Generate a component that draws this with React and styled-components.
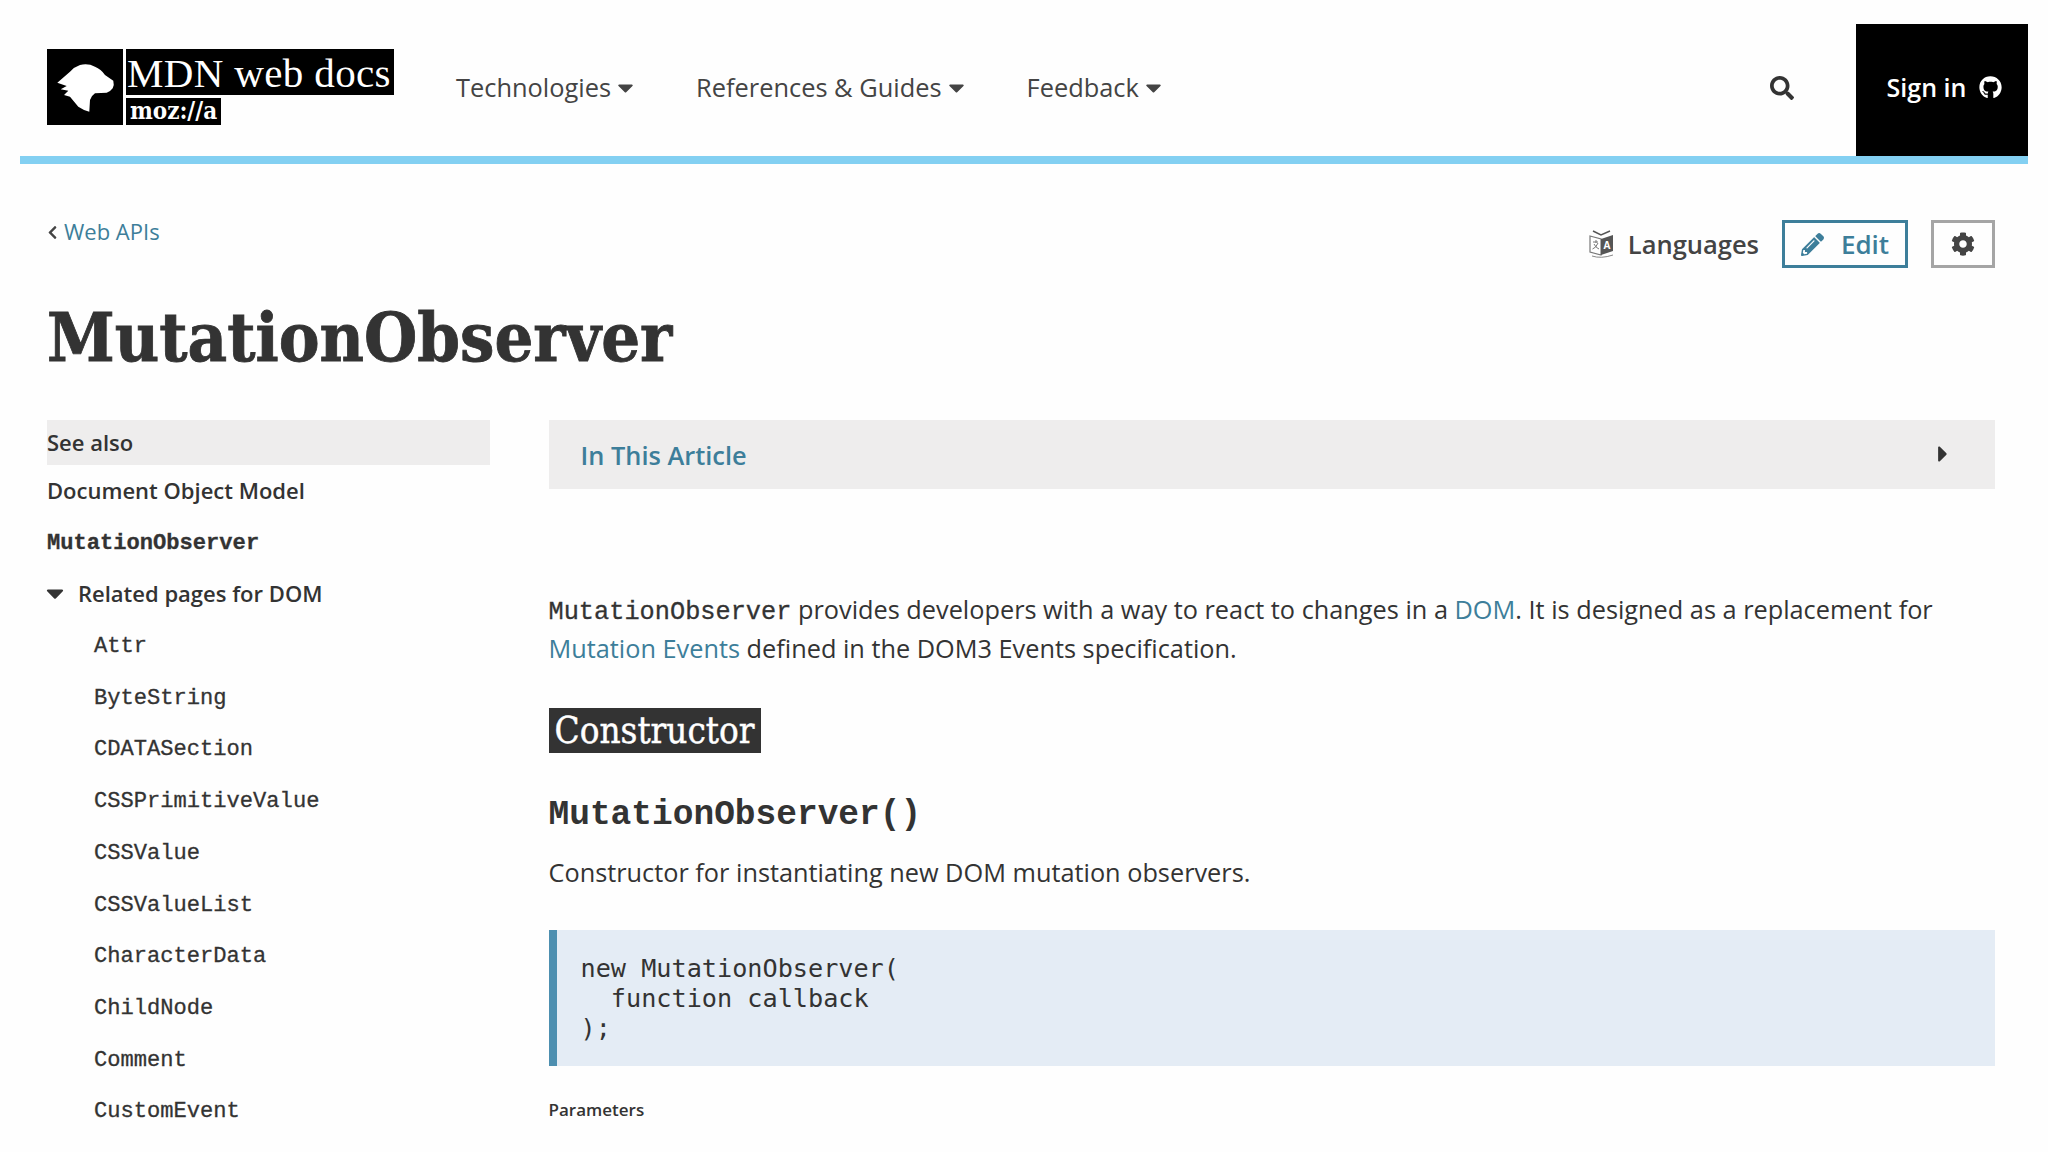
import React from 'react'
import styled, { createGlobalStyle } from 'styled-components'
import { FaCaretDown, FaCaretRight, FaChevronLeft, FaCog, FaGithub, FaPencilAlt, FaSearch } from 'react-icons/fa'

const GlobalStyle = createGlobalStyle`
  html, body {
    margin: 0;
    height: 1152px;
    overflow: hidden;
    background: #fefefe;
  }
  body {
    font-family: 'Open Sans', sans-serif;
    color: #333;
  }
`

const Page = styled.div`
  width: 2048px;
`
const TopBar = styled.header`
  display: flex;
  align-items: stretch;
  height: 132px;
  margin: 24px 20px 0;
  border-bottom: 8px solid #83d0f2;
`
const Logo = styled.a`
  display: flex;
  gap: 3px;
  margin: 25px 0 0 27px;
  height: 76px;
  color: #fff;
`
const LogoMark = styled.svg`
  width: 76px;
  height: 76px;
  background: #000;
`
const LogoWords = styled.div`
  display: flex;
  flex-direction: column;
  align-items: flex-start;
  gap: 3px;
`
const LogoTitle = styled.span`
  display: block;
  height: 46px;
  width: 268px;
  padding: 2px 0 0 1px;
  box-sizing: border-box;
  background: #000;
  font: 41px/44px 'Liberation Serif', serif;
  letter-spacing: 0.35px;
  white-space: nowrap;
`
const LogoMoz = styled.span`
  height: 27px;
  width: 95px;
  background: #000;
  font: bold 24px/26px 'DejaVu Serif Condensed', 'DejaVu Serif', serif;
  text-align: center;
  white-space: nowrap;
`
const Nav = styled.nav`
  display: flex;
  align-items: center;
  gap: 58px;
  flex: 1;
  margin: 0 0 6px 62px;
`
const NavItem = styled.a`
  display: flex;
  align-items: center;
  gap: 2px;
  font-size: 25.4px;
  color: #444;
  white-space: nowrap;
  svg {
    font-size: 25px;
  }
`
const SearchBtn = styled.div`
  display: flex;
  align-items: center;
  margin: 0 62px 4px 0;
  color: #333;
  font-size: 24px;
`
const SignIn = styled.a`
  display: flex;
  align-items: center;
  gap: 13px;
  justify-content: center;
  box-sizing: border-box;
  width: 172px;
  padding: 0 0 6px 5px;
  background: #000;
  color: #fff;
  font-size: 25px;
  font-weight: 600;
  svg {
    font-size: 23px;
  }
`
const Main = styled.main`
  padding: 0 53px 0 47px;
`
const TitleBar = styled.div`
  display: flex;
  justify-content: space-between;
  align-items: flex-start;
  height: 74px;
  padding-top: 56px;
`
const Crumb = styled.a`
  display: flex;
  align-items: center;
  gap: 4px;
  color: #3d7e9a;
  font-size: 22px;
  margin-top: -4px;
  svg {
    font-size: 15px;
    color: #444;
    margin-top: 3px;
    margin-left: -2px;
  }
`
const Actions = styled.div`
  display: flex;
  align-items: center;
  gap: 23px;
`
const Languages = styled.a`
  display: flex;
  align-items: center;
  gap: 13px;
  font-size: 25.5px;
  font-weight: 600;
  color: #444;
`
const EditBtn = styled.a`
  display: flex;
  align-items: center;
  justify-content: center;
  gap: 17px;
  box-sizing: border-box;
  width: 126px;
  height: 48px;
  border: 3px solid #3d7e9a;
  color: #3d7e9a;
  font-size: 26px;
  font-weight: 600;
  svg {
    font-size: 23px;
  }
`
const GearBtn = styled.a`
  display: flex;
  align-items: center;
  justify-content: center;
  box-sizing: border-box;
  width: 64px;
  height: 48px;
  border: 3px solid #a5a5a5;
  color: #444;
  font-size: 24px;
`
const Title = styled.h1`
  margin: -1px 0 0;
  font: bold 68px/88px 'DejaVu Serif Condensed', 'DejaVu Serif', serif;
  color: #333;
  -webkit-text-stroke: 0.8px #333;
`
const Columns = styled.div`
  display: grid;
  grid-template-columns: 443px 1fr;
  gap: 59px;
  margin-top: 39px;
`
const Sidebar = styled.aside`
  display: flex;
  flex-direction: column;
`
const SideHead = styled.div`
  height: 45px;
  background: #eeeded;
  font-size: 22px;
  font-weight: 600;
  line-height: 45px;
  color: #333;
`
const SideLink = styled.a`
  height: 51.7px;
  line-height: 51.7px;
  font-size: 22px;
  font-weight: 600;
  color: #333;
  white-space: nowrap;
`
const SideCode = styled(SideLink)`
  font-family: 'Liberation Mono', monospace;
  font-size: 22.1px;
  line-height: 54px;
  font-weight: ${p => (p.$bold ? 700 : 400)};
  padding-left: ${p => (p.$bold ? 0 : 47)}px;
  -webkit-text-stroke: 0.3px #333;
`
const SideGroup = styled(SideLink)`
  display: flex;
  align-items: center;
  gap: 9px;
  svg {
    font-size: 28px;
    margin-top: -2px;
    margin-left: -6px;
  }
`
const Content = styled.article`
  min-width: 0;
  margin-left: -0.5px;
`
const Toc = styled.div`
  display: flex;
  align-items: center;
  justify-content: space-between;
  height: 69px;
  padding: 0 39px 0 32px;
  background: #eeeded;
  color: #3d7e9a;
  font-size: 25.4px;
  font-weight: 600;
  svg {
    font-size: 26px;
    margin-top: -2px;
    color: #333;
  }
`
const Para = styled.p`
  margin: ${p => p.$top}px 0 0;
  font-size: 25.3px;
  line-height: 39px;
  color: #333;
  code {
    font: 25.3px 'Liberation Mono', monospace;
    -webkit-text-stroke: 0.3px #333;
  }
  a {
    color: #3d7e9a;
  }
`
const SectionHead = styled.h2`
  display: inline-block;
  margin: 40px 0 0;
  padding: 0 7px 0 6px;
  height: 45px;
  background: #333;
  color: #fff;
  font: 36.5px/45px 'DejaVu Serif Condensed', 'DejaVu Serif', serif;
  vertical-align: top;
  -webkit-text-stroke: 0.4px #fff;
`
const MethodHead = styled.h3`
  margin: 38px 0 0;
  font: bold 34.5px/48px 'Liberation Mono', monospace;
  color: #333;
`
const CodeBlock = styled.pre`
  margin: 38px 0 0;
  height: 136px;
  box-sizing: border-box;
  padding: 24px 0 0 24px;
  background: #e4ecf5;
  border-left: 8px solid #4d8fb0;
  font: 25.2px/30px 'DejaVu Sans Mono', monospace;
  color: #333;
`
const SubHead = styled.h4`
  margin: 31px 0 0;
  font-size: 17px;
  line-height: 26px;
  font-weight: 600;
  color: #333;
`

const apis = ['Attr', 'ByteString', 'CDATASection', 'CSSPrimitiveValue', 'CSSValue', 'CSSValueList', 'CharacterData', 'ChildNode', 'Comment', 'CustomEvent']
const navItems = ['Technologies', 'References & Guides', 'Feedback']

const LanguagesIcon = () => (
  <svg width="26" height="28" viewBox="0 0 26 28" fill="none">
    <path d="M1 6 L12 9 V25 L1 22 Z" stroke="#777" strokeWidth="1.2" fill="#fff" />
    <path d="M12 9 L24 5 V21 L12 25 Z" fill="#555" />
    <path d="M4 1 L12 5 L21 1" stroke="#555" strokeWidth="1.5" />
    <path d="M3 26 Q 12 29 24 25" stroke="#888" strokeWidth="1" />
    <path d="M4 12 H9 M7 10 V13 M9 13 Q7 18 3.5 19 M5 14 Q7 18 10 19" stroke="#777" strokeWidth="1" />
    <text x="14.5" y="19" fill="#fff" fontSize="10" fontWeight="700" fontFamily="Open Sans, sans-serif">A</text>
  </svg>
)

const App = () => {
  return (
    <Page>
      <GlobalStyle />
      <TopBar>
        <Logo>
          <LogoMark viewBox="0 0 76 76">
            <path
              fill="#fff"
              d="M10.3 33.7 L23 22.7 Q27 18 33 16 Q41 14 48 17.7 Q54 20 58 26 L66.3 31.7 Q67.5 36 65.7 39.3 Q63 43 59.7 43.7 L48 44.3 Q44 47 43 51 L42.3 62.7 Q36 61 31.3 57.7 L23 47.7 L17 46 L21.3 41.7 L13.7 40.3 L19.7 37 Z"
            />
          </LogoMark>
          <LogoWords>
            <LogoTitle>MDN web docs</LogoTitle>
            <LogoMoz>moz://a</LogoMoz>
          </LogoWords>
        </Logo>
        <Nav>
          {navItems.map(item => (
            <NavItem key={item}>
              {item}
              <FaCaretDown />
            </NavItem>
          ))}
        </Nav>
        <SearchBtn>
          <FaSearch />
        </SearchBtn>
        <SignIn>
          Sign in
          <FaGithub />
        </SignIn>
      </TopBar>
      <Main>
        <TitleBar>
          <Crumb>
            <FaChevronLeft />
            Web APIs
          </Crumb>
          <Actions>
            <Languages>
              <LanguagesIcon />
              Languages
            </Languages>
            <EditBtn>
              <FaPencilAlt />
              Edit
            </EditBtn>
            <GearBtn>
              <FaCog />
            </GearBtn>
          </Actions>
        </TitleBar>
        <Title>MutationObserver</Title>
        <Columns>
          <Sidebar>
            <SideHead>See also</SideHead>
            <SideLink>Document Object Model</SideLink>
            <SideCode $bold>MutationObserver</SideCode>
            <SideGroup>
              <FaCaretDown />
              Related pages for DOM
            </SideGroup>
            {apis.map(name => (
              <SideCode key={name}>{name}</SideCode>
            ))}
          </Sidebar>
          <Content>
            <Toc>
              In This Article
              <FaCaretRight />
            </Toc>
            <Para $top={101}>
              <code>MutationObserver</code> provides developers with a way to react to changes in a <a>DOM</a>. It is
              designed as a replacement for <a>Mutation Events</a> defined in the DOM3 Events specification.
            </Para>
            <SectionHead>Constructor</SectionHead>
            <MethodHead>MutationObserver()</MethodHead>
            <Para $top={14}>Constructor for instantiating new DOM mutation observers.</Para>
            <CodeBlock>{`new MutationObserver(
  function callback
);`}</CodeBlock>
            <SubHead>Parameters</SubHead>
          </Content>
        </Columns>
      </Main>
    </Page>
  )
}

export default App
